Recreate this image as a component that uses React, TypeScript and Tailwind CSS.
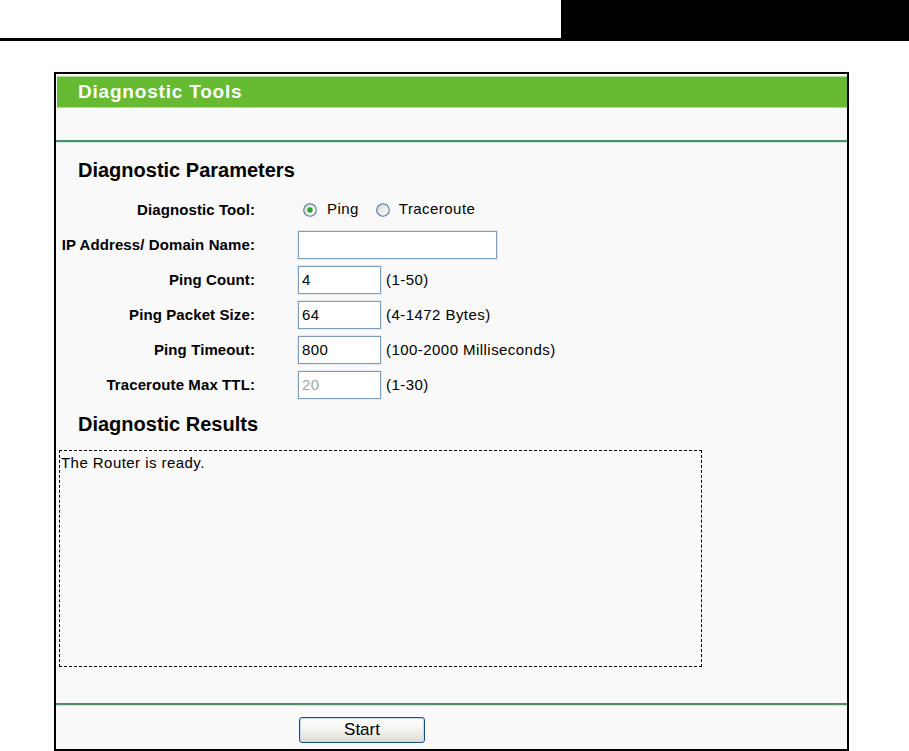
import React from "react";

function Radio({ checked, id }: { checked: boolean; id: string }) {
  return (
    <svg width="14" height="14" viewBox="0 0 14 14" className="shrink-0">
      <defs>
        <linearGradient id={id} x1="0" y1="0" x2="1" y2="1">
          <stop offset="0" stopColor="#d8d8d0" />
          <stop offset="1" stopColor="#ffffff" />
        </linearGradient>
      </defs>
      <circle cx="7" cy="7" r="6.3" fill={`url(#${id})`} stroke="#4a74a0" strokeWidth="1.1" />
      {checked && <circle cx="7" cy="7" r="2.7" fill="#2aa52a" />}
    </svg>
  );
}

function Field({ value, width, disabled }: { value: string; width: string; disabled?: boolean }) {
  return (
    <input
      readOnly
      value={value}
      className={`${width} h-[28px] border border-[#7f9db9] bg-white pl-[3px] text-[15px] tracking-[0.4px] font-['Liberation_Sans',Arial,sans-serif] shadow-[0_0_0_1px_#e3e9f0] outline-none ${
        disabled ? "text-[#a6a6a6]" : "text-black"
      }`}
    />
  );
}

function Row({ label, children }: { label: string; children: React.ReactNode }) {
  return (
    <div className="flex h-[35px] items-center">
      <div className="w-[199px] whitespace-nowrap text-right text-[15px] font-bold leading-[18px] tracking-[0.1px]">{label}</div>
      <div className="ml-[43px] flex items-center">{children}</div>
    </div>
  );
}

function Hint({ children }: { children: React.ReactNode }) {
  return <span className="ml-[5px] text-[15px] leading-[18px] tracking-[0.45px]">{children}</span>;
}

export default function App() {
  return (
    <div className="h-[751px] w-[909px] overflow-hidden bg-white font-['Liberation_Sans',Arial,sans-serif] text-black">
      <div className="flex h-[38px]">
        <div className="flex-1" />
        <div className="w-[348px] bg-black" />
      </div>
      <div className="h-[3px] bg-black" />

      <div className="ml-[54px] mt-[31px] h-[679px] w-[795px] border-2 border-black bg-[#f9f9f9]">
        <div className="pt-[2px]">
          <div className="ml-[1px] flex h-[32px] items-center border-y border-[#b3dc9b] bg-[#66bb33] pl-[21px]">
            <span className="text-[19px] font-bold tracking-[0.8px] text-white">Diagnostic Tools</span>
          </div>
        </div>
        <div className="h-[32px]" />
        <div className="h-[2px] bg-[#4e8c6d]" />
        <div className="h-[1px] bg-[#cfe6d8]" />

        <div className="mt-[15px] h-[24px] pl-[22px] text-[20px] font-bold leading-[24px]">
          Diagnostic Parameters
        </div>

        <div className="mt-[10px]">
          <Row label="Diagnostic Tool:">
            <div className="ml-[5px] flex items-center text-[15px] tracking-[0.45px]">
              <Radio checked id="r1" />
              <span className="ml-[10px]">Ping</span>
              <span className="ml-[17px] flex items-center">
                <Radio checked={false} id="r2" />
              </span>
              <span className="ml-[9px]">Traceroute</span>
            </div>
          </Row>
          <Row label="IP Address/ Domain Name:">
            <Field value="" width="w-[199px]" />
          </Row>
          <Row label="Ping Count:">
            <Field value="4" width="w-[83px]" />
            <Hint>(1-50)</Hint>
          </Row>
          <Row label="Ping Packet Size:">
            <Field value="64" width="w-[83px]" />
            <Hint>(4-1472 Bytes)</Hint>
          </Row>
          <Row label="Ping Timeout:">
            <Field value="800" width="w-[83px]" />
            <Hint>(100-2000 Milliseconds)</Hint>
          </Row>
          <Row label="Traceroute Max TTL:">
            <Field value="20" width="w-[83px]" disabled />
            <Hint>(1-30)</Hint>
          </Row>
        </div>

        <div className="mt-[10px] h-[24px] pl-[22px] text-[20px] font-bold leading-[24px]">
          Diagnostic Results
        </div>

        <div className="ml-[3px] mt-[14px] h-[217px] w-[643px] border border-dashed border-black pl-[1px] pt-[3px] text-[15px] leading-[17px] tracking-[0.45px]">
          The Router is ready.
        </div>

        <div className="mt-[36px] h-[2px] bg-[#4e8c6d]" />
        <div className="h-[1px] bg-[#cfe6d8]" />

        <div className="ml-[243px] mt-[11px] flex h-[26px] w-[126px] items-center justify-center rounded-[3px] border border-[#1b4f8a] bg-gradient-to-b from-white via-[#f4f3ee] to-[#dcdad2] text-[17px] shadow-[inset_0_0_0_1px_#c6d8f0]">
          Start
        </div>
      </div>
    </div>
  );
}
